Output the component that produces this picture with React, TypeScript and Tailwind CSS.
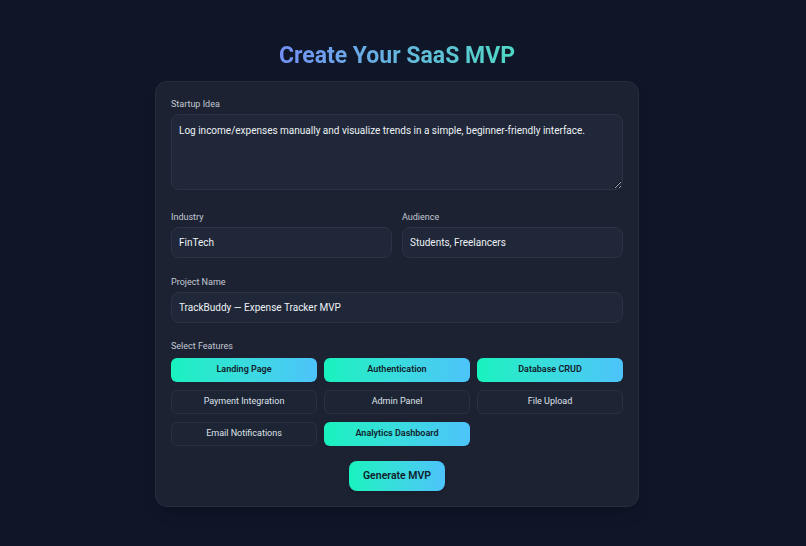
import React from "react";

const features = [
  { name: "Landing Page", on: true },
  { name: "Authentication", on: true },
  { name: "Database CRUD", on: true },
  { name: "Payment Integration", on: false },
  { name: "Admin Panel", on: false },
  { name: "File Upload", on: false },
  { name: "Email Notifications", on: false },
  { name: "Analytics Dashboard", on: true },
];

const font = { fontFamily: 'Roboto, "Noto Sans", sans-serif' };

export default function App() {
  return (
    <div
      className="flex min-h-[546px] w-full flex-col items-center bg-[#0f1628] pr-[12px] pt-[39px] text-[#e5e7eb]"
      style={font}
    >
      <h1 className="bg-gradient-to-r from-[#7390f5] to-[#4ed8c4] bg-clip-text text-[23px] font-bold leading-[34px] text-transparent">
        Create Your SaaS MVP
      </h1>

      <div className="mt-[8px] w-[484px] rounded-xl border border-[#262d3d] bg-[#1c2232] px-[15px] pb-[15px] pt-[15px] shadow-lg">
        <label className="block text-[9px] leading-[14px] text-[#c3c9d3]">Startup Idea</label>
        <textarea
          className="mt-[3px] block h-[76px] w-full resize-y rounded-lg border border-[#2b3344] bg-[#1f2738] px-[7px] py-[8px] text-[10px] leading-[16px] text-[#eef1f5] outline-none"
          defaultValue="Log income/expenses manually and visualize trends in a simple, beginner-friendly interface."
        />

        <div className="mt-[20px] grid grid-cols-2 gap-[10px]">
          <div>
            <label className="block text-[9px] leading-[14px] text-[#c3c9d3]">Industry</label>
            <div className="mt-[3px] flex h-[31px] items-center rounded-lg border border-[#2b3344] bg-[#1f2738] px-[7px] text-[10px] text-[#eef1f5]">
              FinTech
            </div>
          </div>
          <div>
            <label className="block text-[9px] leading-[14px] text-[#c3c9d3]">Audience</label>
            <div className="mt-[3px] flex h-[31px] items-center rounded-lg border border-[#2b3344] bg-[#1f2738] px-[7px] text-[10px] text-[#eef1f5]">
              Students, Freelancers
            </div>
          </div>
        </div>

        <div className="mt-[17px]">
          <label className="block text-[9px] leading-[14px] text-[#c3c9d3]">Project Name</label>
          <div className="mt-[3px] flex h-[31px] items-center rounded-lg border border-[#2b3344] bg-[#1f2738] px-[7px] text-[10px] text-[#eef1f5]">
            TrackBuddy — Expense Tracker MVP
          </div>
        </div>

        <div className="mt-[16px]">
          <label className="block text-[9px] leading-[14px] text-[#c3c9d3]">Select Features</label>
          <div className="mt-[5px] grid grid-cols-3 gap-x-[7px] gap-y-[8px]">
            {features.map((f) =>
              f.on ? (
                <button
                  key={f.name}
                  className="flex h-[24px] items-center justify-center rounded-md bg-gradient-to-r from-[#17f2be] to-[#4dc3fa] text-[9px] font-semibold text-[#10202a]"
                >
                  {f.name}
                </button>
              ) : (
                <button
                  key={f.name}
                  className="flex h-[24px] items-center justify-center rounded-md border border-[#293142] bg-[#1d2434] text-[9px] text-[#dde2ea]"
                >
                  {f.name}
                </button>
              )
            )}
          </div>
        </div>

        <div className="mt-[15px] flex justify-center">
          <button className="h-[30px] w-[96px] rounded-lg bg-gradient-to-r from-[#17f2be] to-[#4dc3fa] text-[10.5px] font-semibold text-[#10202a] shadow-md">
            Generate MVP
          </button>
        </div>
      </div>
    </div>
  );
}
